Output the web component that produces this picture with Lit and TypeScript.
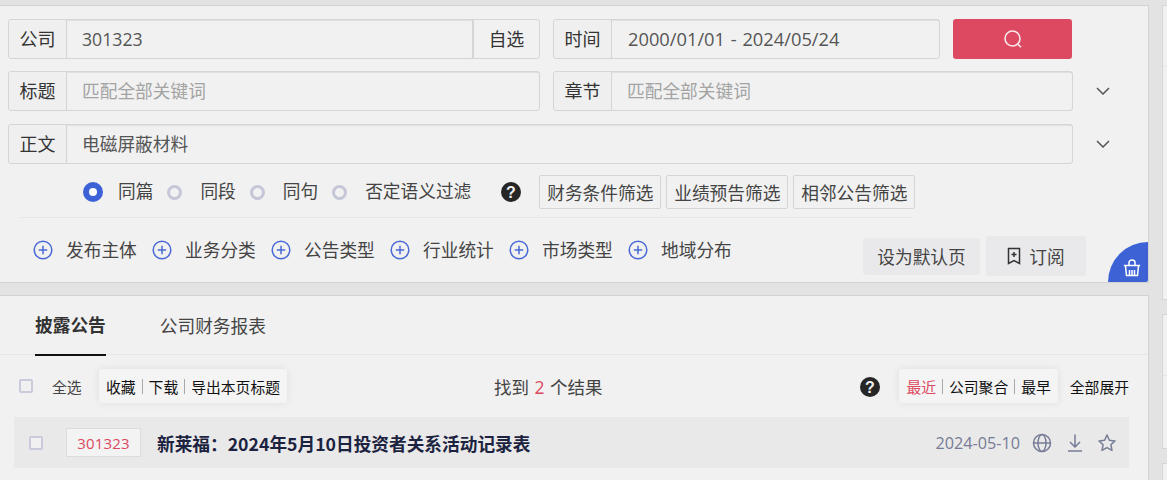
import { LitElement, html, css } from "lit";
import { customElement } from "lit/decorators.js";

const plus = html`<svg class="plus" viewBox="0 0 20 20" width="20" height="20" fill="none" stroke="#4a69d6" stroke-width="1.5"><circle cx="10" cy="10" r="8.8"/><path d="M10 5.8v8.4M5.8 10h8.4"/></svg>`;
const help = (c: string) => html`<svg class="${c}" viewBox="0 0 20 20" width="20" height="20"><circle cx="10" cy="10" r="10" fill="#262626"/><text x="10" y="15.5" text-anchor="middle" font-size="16" font-weight="700" fill="#f1f1f1" font-family="Liberation Sans, sans-serif">?</text></svg>`;
const chevron = html`<svg class="chev" viewBox="0 0 14 8" width="14" height="8" fill="none" stroke="#555" stroke-width="1.5"><path d="M1 1l6 6 6-6"/></svg>`;

@customElement("app-root")
export class AppRoot extends LitElement {
  static styles = css`
    :host { display: block; width: 1167px; height: 480px; overflow: hidden; background: #e3e3e3; font-family: "Noto Sans CJK SC", "Liberation Sans", sans-serif; color: #333; }
    * { box-sizing: border-box; }
    .page { display: flex; height: 480px; padding-top: 5px; gap: 13px; }
    .main { width: 1149px; flex: none; display: flex; flex-direction: column; gap: 12px; }
    .side { flex: 1; display: flex; flex-direction: column; gap: 14px; }
    .sp { background: #f1f1f1; border: 1px solid #d6d6d6; border-right: 0; flex: none; }
    .sp i { display: block; height: 1px; background: #e6e6e6; }
    .s1 { height: 295px; } .s1 i { margin-top: 60px; }
    .s2 { height: 135px; } .s2 i { margin-top: 60px; }
    .s3 { height: 60px; } 
    .top { position: relative; height: 278px; flex: none; background: #f1f1f1; border: 1px solid #d2d2d2; border-left: 0; padding: 13px 0 0 8px; }
    .row { display: flex; align-items: center; height: 40px; }
    .row + .row { margin-top: 12px; }
    .row.r3 { margin-top: 13px; }
    .field { display: flex; height: 40px; border: 1px solid #d3d5d7; border-radius: 3px; font-size: 17.7px; flex: none; line-height: 36px; }
    .lab { width: 58px; flex: none; display: flex; align-items: center; justify-content: center; background: #efefef; border-right: 1px solid #d3d5d7; border-radius: 3px 0 0 3px; color: #333; padding-bottom: 2px; font-size: 18px; }
    .val { flex: 1; display: flex; align-items: center; padding: 0 0 2px 15px; color: #555; box-shadow: inset 0 1px 1px rgba(0,0,0,.07); }
    .val.ph { color: #a3a3a3; }
    .num { font-family: "Open Sans", "Noto Sans CJK SC", sans-serif; font-size: 17.7px; padding-bottom: 0; }
    .range { font-family: "Open Sans", "Noto Sans CJK SC", sans-serif; font-size: 18.3px; word-spacing: 1px; padding: 0 0 0 16px; }
    .pick { width: 67px; flex: none; display: flex; align-items: center; justify-content: center; border-left: 2px solid #d3d5d7; padding-bottom: 2px; }
    .w532 { width: 532px; margin-right: 13px; }
    .w387 { width: 387px; }
    .w520 { width: 520px; }
    .w1065 { width: 1065px; }
    .go { width: 119px; height: 40px; margin-left: 13px; background: #dc4960; border-radius: 3px; display: flex; align-items: center; justify-content: center; }
    .chev { margin-left: 23px; }
    .opts { display: flex; align-items: center; height: 34px; margin-top: 11px; padding-left: 75px; font-size: 17.7px; color: #444; }
    .opts > span.t { position: relative; top: -2px; }
    .dot { width: 15px; height: 15px; border-radius: 50%; border: 3px solid #c5c7d9; margin: 0 18px 0 14px; flex: none; }
    .dot.on { width: 20px; height: 20px; margin: 0 15px 0 0; border: 6px solid #3c62d6; background: #fff; }
    .opts .q { margin: 0 18px 0 30px; flex: none; }
    .btn { height: 34px; width: 122px; margin-right: 5px; flex: none; border: 1px solid #d3d5d7; border-radius: 2px; display: flex; align-items: center; justify-content: center; font-size: 17.7px; color: #444; padding-bottom: 1px; }
    .rule { height: 1px; background: #e6e6e6; margin: 8px 0 0 12px; width: 893px; }
    .filters { display: flex; align-items: center; height: 64px; padding-left: 25px; font-size: 17.7px; color: #444; }
    .f { display: flex; align-items: center; gap: 13px; margin-right: 15px; }
    .f .plus { flex: none; }
    .f span { width: 71px; white-space: nowrap; position: relative; top: -1px; }
    .acts { margin: 12px 62px 0 auto; display: flex; align-items: center; gap: 6px; }
    .gb { background: #e9e9eb; border-radius: 3px; display: flex; align-items: center; justify-content: center; color: #444; font-size: 17.7px; gap: 8px; }
    .g1 { width: 117px; height: 37px; }
    .g2 { width: 100px; height: 40px; }
    .cart { position: absolute; right: 0; bottom: 0; width: 40px; height: 40px; background: #3c62d6; border-radius: 40px 0 2px 0; display: flex; align-items: flex-end; justify-content: flex-end; padding: 0 7px 5px 0; }
    .list { flex: 1; background: #f1f1f1; border: 1px solid #d2d2d2; border-left: 0; border-bottom: 0; }
    .tabs { display: flex; height: 59px; border-bottom: 1px solid #e6e6e6; padding-left: 35px; gap: 54px; font-size: 17.7px; color: #444; }
    .tab { height: 60px; display: flex; align-items: center; padding-bottom: 3px; }
    .tab.on { font-weight: 700; color: #333; border-bottom: 2px solid #111; }
    .tools { display: flex; align-items: center; height: 62px; padding-left: 19px; font-size: 14.8px; color: #111; position: relative; }
    .cb { width: 14px; height: 14px; flex: none; border: 2px solid #c9cbdc; border-radius: 2px; background: #f1f1f1; }
    .all { margin-left: 19px; color: #444; width: 47px; white-space: nowrap; }
    .pill { display: flex; align-items: center; height: 34px; padding: 0 7px; background: #f4f4f4; border-radius: 3px; box-shadow: 0 0 8px rgba(0,0,0,.08); white-space: nowrap; }
    .pill u { display: block; width: 1px; height: 15px; background: #a8a8a8; margin: 0 6px; }
    .found { position: absolute; left: 494px; font-size: 17.5px; color: #444; white-space: nowrap; }
    .red { color: #dc4960; }
    .found .red { margin: 0 1px; font-family: "Open Sans", sans-serif; }
    .rt { margin-left: auto; display: flex; align-items: center; }
    .rt .q { margin-right: 19px; margin-top: 1px; }
    .expand { margin: 0 19px 0 12px; white-space: nowrap; }
    .item { display: flex; align-items: center; height: 51px; margin: 0 19px 0 14px; background: #e9e9e9; padding-left: 15px; }
    .tag { width: 75px; height: 29px; margin-left: 23px; background: #f3f3f3; border: 1px solid #dcdcde; display: flex; align-items: center; justify-content: center; color: #dc4960; font-size: 15px; font-family: "Open Sans", sans-serif; letter-spacing: .2px; }
    .title { margin-left: 16px; font-size: 17.68px; font-weight: 700; color: #1c2340; white-space: nowrap; }
    .date { margin-left: auto; font-family: "Open Sans", sans-serif; font-size: 16.2px; color: #767c95; }
    .ico { display: flex; align-items: center; gap: 12.5px; margin: 0 12px 0 12px; }
  `;

  render() {
    const filters = ["发布主体", "业务分类", "公告类型", "行业统计", "市场类型", "地域分布"];
    return html`<div class="page">
      <div class="main">
        <section class="top">
          <div class="row">
            <div class="field w532"><div class="lab">公司</div><div class="val num">301323</div><div class="pick">自选</div></div>
            <div class="field w387"><div class="lab">时间</div><div class="val range">2000/01/01 - 2024/05/24</div></div>
            <div class="go"><svg viewBox="0 0 20 20" width="20" height="20" fill="none" stroke="#fbe9ec" stroke-width="1.6"><circle cx="9.5" cy="9.5" r="7.5"/><path d="M14.5 15l3.5 3.2"/></svg></div>
          </div>
          <div class="row">
            <div class="field w532"><div class="lab">标题</div><div class="val ph">匹配全部关键词</div></div>
            <div class="field w520"><div class="lab">章节</div><div class="val ph">匹配全部关键词</div></div>
            ${chevron}
          </div>
          <div class="row r3">
            <div class="field w1065"><div class="lab">正文</div><div class="val">电磁屏蔽材料</div></div>
            ${chevron}
          </div>
          <div class="opts">
            <span class="dot on"></span><span class="t">同篇</span><span class="dot"></span><span class="t">同段</span><span class="dot"></span><span class="t">同句</span><span class="dot"></span><span class="t">否定语义过滤</span>
            ${help("q")}
            <div class="btn">财务条件筛选</div><div class="btn">业绩预告筛选</div><div class="btn">相邻公告筛选</div>
          </div>
          <div class="rule"></div>
          <div class="filters">
            ${filters.map((f) => html`<div class="f">${plus}<span>${f}</span></div>`)}
            <div class="acts">
              <div class="gb g1">设为默认页</div>
              <div class="gb g2"><svg viewBox="0 0 14 18" width="14" height="18" fill="none" stroke="#333" stroke-width="1.5"><path d="M1.5 1.5h11v15L7 13.5l-5.5 3z"/><path d="M7 5v5M4.5 7.5h5"/></svg>订阅</div>
            </div>
          </div>
          <div class="cart"><svg viewBox="0 0 18 18" width="18" height="18" fill="none" stroke="#fff" stroke-width="1.5"><path d="M6 6V3.5a3 2.5 0 0 1 6 0V6"/><path d="M.8 6.5h16.4"/><path d="M2.5 7l1 9.5h11l1-9.5"/><path d="M6.5 11v5M9 11v5M11.5 11v5"/></svg></div>
        </section>
        <section class="list">
          <div class="tabs"><div class="tab on">披露公告</div><div class="tab">公司财务报表</div></div>
          <div class="tools">
            <span class="cb"></span><span class="all">全选</span>
            <div class="pill">收藏<u></u>下载<u></u>导出本页标题</div>
            <div class="found">找到<span class="red"> 2 </span>个结果</div>
            <div class="rt">
              ${help("q")}
              <div class="pill"><span class="red">最近</span><u></u>公司聚合<u></u>最早</div>
              <div class="expand">全部展开</div>
            </div>
          </div>
          <div class="item">
            <span class="cb"></span>
            <div class="tag">301323</div>
            <div class="title">新莱福：2024年5月10日投资者关系活动记录表</div>
            <div class="date">2024-05-10</div>
            <div class="ico">
              <svg viewBox="0 0 20 20" width="20" height="20" fill="none" stroke="#767c95" stroke-width="1.5"><circle cx="10" cy="10" r="8.5"/><ellipse cx="10" cy="10" rx="4" ry="8.5"/><path d="M1.5 10h17"/></svg>
              <svg viewBox="0 0 20 20" width="20" height="20" fill="none" stroke="#767c95" stroke-width="1.5"><path d="M10 1.5v12M5 9l5 5 5-5M3 18h14"/></svg>
              <svg viewBox="0 0 20 20" width="20" height="20" fill="none" stroke="#767c95" stroke-width="1.5" stroke-linejoin="round"><path d="M10 2l2.4 5.2 5.6.7-4.1 3.9 1.1 5.6L10 14.6l-5 2.8 1.1-5.6L2 7.9l5.6-.7z"/></svg>
            </div>
          </div>
        </section>
      </div>
      <aside class="side">
        <div class="sp s1"><i></i></div>
        <div class="sp s2"><i></i></div>
        <div class="sp s3"></div>
      </aside>
    </div>`;
  }
}
